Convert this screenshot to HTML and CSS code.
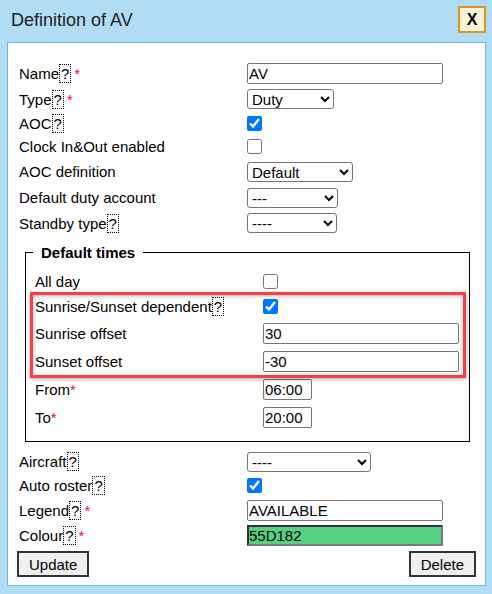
FILE: index.html
```html
<!DOCTYPE html>
<html lang="en">
<head>
    <meta charset="UTF-8">
    <meta name="viewport" content="width=device-width, initial-scale=1.0">
    <title>Definition of AV</title>
    <link rel="stylesheet" href="styles.css">
</head>
<body>
    <div class="dialog_head">
        <h1 class="dialog_title">Definition of AV</h1>
        <a href="" class="close_btn">X</a>
    </div>
    <div class="dialog_body">
        <div class="row h26"><span class="lbl">Name<span class="help">?</span><span class="req">*</span></span><input type="text" class="txt w196" value="AV"></div>
        <div class="row h26"><span class="lbl">Type<span class="help">?</span><span class="req">*</span></span><select class="sel w87"><option>Duty</option></select></div>
        <div class="row h22"><span class="lbl">AOC<span class="help">?</span></span><input type="checkbox" class="chk" checked></div>
        <div class="row h24"><span class="lbl">Clock In&amp;Out enabled</span><input type="checkbox" class="chk"></div>
        <div class="row h27"><span class="lbl">AOC definition</span><select class="sel w106"><option>Default</option></select></div>
        <div class="row h25"><span class="lbl">Default duty account</span><select class="sel w91"><option>---</option></select></div>
        <div class="row h26"><span class="lbl">Standby type<span class="help">?</span></span><select class="sel w90"><option>----</option></select></div>

        <fieldset class="times">
            <legend>Default times</legend>
            <div class="row h26"><span class="lbl">All day</span><input type="checkbox" class="chk"></div>
            <div class="mark">
                <div class="row h25"><span class="lbl">Sunrise/Sunset dependent<span class="help">?</span></span><input type="checkbox" class="chk" checked></div>
                <div class="row h29"><span class="lbl">Sunrise offset</span><input type="text" class="txt w196" value="30"></div>
                <div class="row h27"><span class="lbl">Sunset offset</span><input type="text" class="txt w196" value="-30"></div>
            </div>
            <div class="row h28"><span class="lbl">From<span class="star">*</span></span><input type="text" class="txt w49" value="06:00"></div>
            <div class="row h28"><span class="lbl">To<span class="star">*</span></span><input type="text" class="txt w49" value="20:00"></div>
        </fieldset>

        <div class="row h25"><span class="lbl">Aircraft<span class="help">?</span></span><select class="sel w124"><option>----</option></select></div>
        <div class="row h23"><span class="lbl">Auto roster<span class="help">?</span></span><input type="checkbox" class="chk" checked></div>
        <div class="row h26"><span class="lbl">Legend<span class="help">?</span><span class="req">*</span></span><input type="text" class="txt w196" value="AVAILABLE"></div>
        <div class="row h25"><span class="lbl">Colour<span class="help">?</span><span class="req">*</span></span><input type="text" class="txt w196 colour" value="55D182"></div>

        <div class="btns">
            <button class="btn">Update</button>
            <button class="btn">Delete</button>
        </div>
    </div>
</body>
</html>
```

FILE: styles.css
```css
* { margin: 0; padding: 0; box-sizing: border-box; }
body {
    background: #b0dcf4;
    font-family: "Liberation Sans", Arial, sans-serif;
    font-size: 15px;
    color: #000;
}

/* 머리 */
.dialog_head {
    height: 42px;
    display: flex;
    align-items: center;
    justify-content: space-between;
    padding: 0 6px 0 11px;
}
.dialog_title {
    font-size: 18px;
    font-weight: normal;
    color: #222;
    margin-top: -2px;
}
.close_btn {
    width: 28px;
    height: 27px;
    margin-top: -3px;
    border: 2px solid #e6901f;
    background: #fff4dc;
    display: flex;
    align-items: center;
    justify-content: center;
    font-weight: bold;
    font-size: 16px;
    color: #000;
    text-decoration: none;
}

/* 본문 */
.dialog_body {
    margin: 0 6px 0 7px;
    background: #fff;
    border: 1px solid #69b7e7;
    padding: 17px 9px 8px;
}
.row { display: flex; align-items: center; }
.h22 { height: 22px; }
.h23 { height: 23px; }
.h24 { height: 24px; }
.h25 { height: 25px; }
.h26 { height: 26px; }
.h27 { height: 27px; }
.h28 { height: 28px; }
.h29 { height: 29px; }

.lbl {
    width: 230px;
    flex-shrink: 0;
    padding-left: 2px;
    line-height: 17px;
    white-space: nowrap;
}
.help {
    display: inline-block;
    border: 1px dotted #000;
    padding: 0 1px;
    line-height: 17px;
}
.req { color: #e8102a; margin-left: 3px; }
.star { color: #e8102a; }

.txt {
    font: 15px "Liberation Sans", Arial, sans-serif;
    height: 21px;
    border: 1px solid #767676;
    border-radius: 2px;
    padding: 0 1px;
    color: #000;
    background: #fff;
}
.w196 { width: 196px; }
.w49 { width: 49px; }
.colour {
    background: #55d182;
    border-width: 2px;
    border-style: solid;
    border-color: #333 #7a7a7a #7a7a7a #333;
    border-radius: 0;
    padding: 0;
}
.sel {
    font: 15px "Liberation Sans", Arial, sans-serif;
    height: 20px;
    border: 1px solid #767676;
    border-radius: 3px;
    background: #fff;
    color: #000;
}
.w87 { width: 87px; }
.w90 { width: 90px; }
.w91 { width: 91px; }
.w106 { width: 106px; }
.w124 { width: 124px; }
.chk { width: 15px; height: 15px; margin: 0; }

/* 기본 시간 */
.times {
    margin: 8px 6px 7px 8px;
    border: 1px solid #000;
    padding: 7px 10px 10px 9px;
}
.times legend {
    font-weight: bold;
    line-height: 17px;
    padding: 0 8px;
    margin-left: -2px;
}
.times .lbl { width: 228px; padding-left: 0; }
.mark { position: relative; }
.mark::after {
    content: "";
    position: absolute;
    top: -2px;
    bottom: -3px;
    left: -5px;
    right: -7px;
    border: 3px solid #f1424a;
    box-shadow: 0 1px 4px rgba(0, 0, 0, .35), inset 0 1px 4px rgba(0, 0, 0, .3);
    pointer-events: none;
}

.btns {
    display: flex;
    justify-content: space-between;
    margin-top: 3px;
}
.btn {
    font: 15px "Liberation Sans", Arial, sans-serif;
    height: 26px;
    padding: 0 10px;
    border: 2px solid #333;
    background: #efefef;
    color: #000;
}
```
